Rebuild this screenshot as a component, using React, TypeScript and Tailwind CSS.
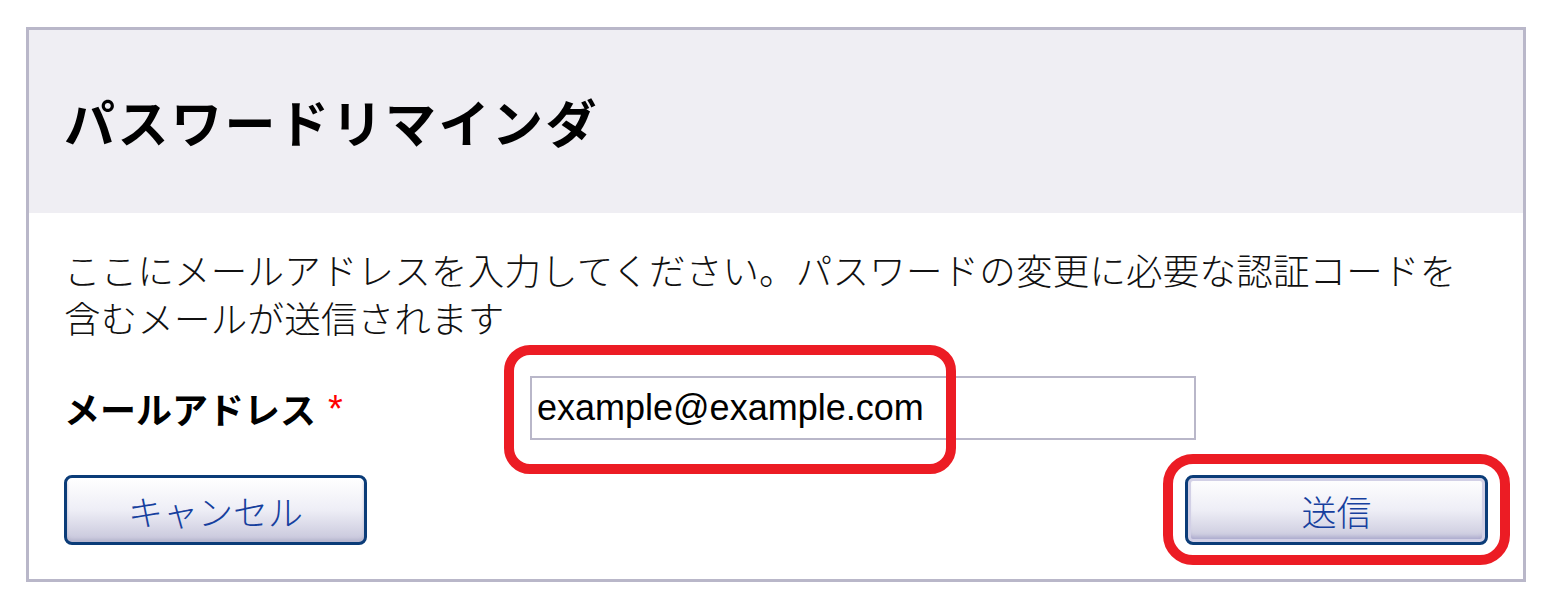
export default function App() {
  const jp = "font-['Noto_Sans_CJK_JP',_'Noto_Sans',_sans-serif]"
  const btn =
    'w-[303px] h-[70px] rounded-[8px] border-[3px] border-[#0b3c78] bg-gradient-to-b from-[#ffffff] via-[#eeeef6] to-[#c6c5da] text-[35px] font-light text-[#163f9e] leading-none'

  return (
    <div className="min-h-[609px] bg-white pt-[27px] pl-[26px]">
      <div className={`w-[1500px] border-[3px] border-[#b9b7c9] ${jp}`}>
        {/* Header */}
        <div className="h-[183px] bg-[#efeef3] flex items-center px-[35px]">
          <h1 className="text-[51px] font-bold tracking-[2.5px] text-black leading-none">
            パスワードリマインダ
          </h1>
        </div>

        {/* Body */}
        <div className="px-[35px] pt-[33px] pb-[34px]">
          <p className="text-[36.5px] font-light tracking-[0.2px] leading-[48px] text-[#111]">
            ここにメールアドレスを入力してください。パスワードの変更に必要な認証コードを
            <br />
            含むメールが送信されます
          </p>

          <div className="mt-[34px] flex items-center">
            <label className="w-[466px] flex items-center text-[36px] font-bold text-black leading-none">
              メールアドレス
              <span className="ml-[12px] mt-[2px] text-[38px] font-normal text-[#ff0000] font-['Liberation_Sans',_Arial,_sans-serif]">*</span>
            </label>
            <div className="relative">
              <input
                type="text"
                defaultValue="example@example.com"
                className="w-[666px] h-[64px] border-2 border-[#b9b7c9] bg-white pl-[5px] text-[36px] text-black outline-none font-['Liberation_Sans',_Arial,_sans-serif]"
              />
              <div className="pointer-events-none absolute left-[-26px] top-[-31px] w-[452px] h-[129px] rounded-[26px] border-[10px] border-[#ec1c24]" />
            </div>
          </div>

          <div className="mt-[35px] flex items-center justify-between">
            <button className={`${btn} shadow-[inset_0_2px_0_#ffffff,inset_0_-3px_3px_#b9b8d0]`}>
              キャンセル
            </button>
            <div className="relative">
              <button className={`${btn} shadow-[inset_0_0_0_3px_#d2d0e6,inset_0_-5px_4px_#a9a7cc]`}>
                送信
              </button>
              <div className="pointer-events-none absolute left-[-22px] top-[-21px] w-[347px] h-[111px] rounded-[30px] border-[10px] border-[#ec1c24]" />
            </div>
          </div>
        </div>
      </div>
    </div>
  )
}
